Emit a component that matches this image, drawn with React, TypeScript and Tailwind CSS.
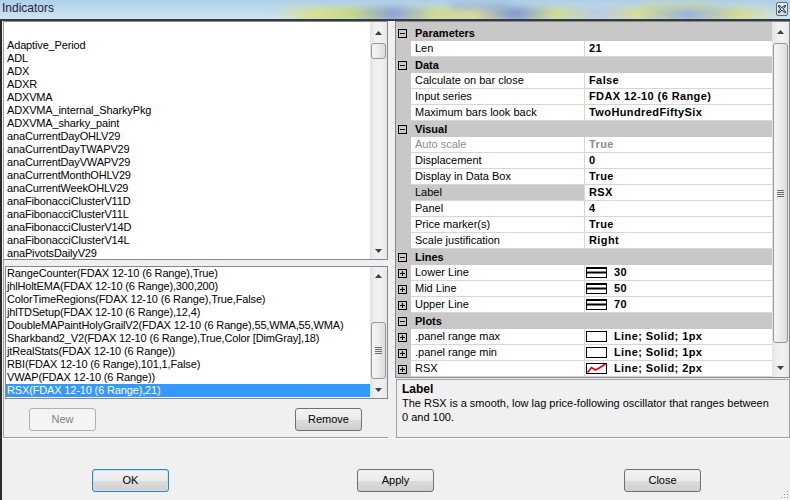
import React from "react";

const available = [
  "",
  "Adaptive_Period",
  "ADL",
  "ADX",
  "ADXR",
  "ADXVMA",
  "ADXVMA_internal_SharkyPkg",
  "ADXVMA_sharky_paint",
  "anaCurrentDayOHLV29",
  "anaCurrentDayTWAPV29",
  "anaCurrentDayVWAPV29",
  "anaCurrentMonthOHLV29",
  "anaCurrentWeekOHLV29",
  "anaFibonacciClusterV11D",
  "anaFibonacciClusterV11L",
  "anaFibonacciClusterV14D",
  "anaFibonacciClusterV14L",
  "anaPivotsDailyV29",
];

const applied = [
  "RangeCounter(FDAX 12-10 (6 Range),True)",
  "jhlHoltEMA(FDAX 12-10 (6 Range),300,200)",
  "ColorTimeRegions(FDAX 12-10 (6 Range),True,False)",
  "jhlTDSetup(FDAX 12-10 (6 Range),12,4)",
  "DoubleMAPaintHolyGrailV2(FDAX 12-10 (6 Range),55,WMA,55,WMA)",
  "Sharkband2_V2(FDAX 12-10 (6 Range),True,Color [DimGray],18)",
  "jtRealStats(FDAX 12-10 (6 Range))",
  "RBI(FDAX 12-10 (6 Range),101,1,False)",
  "VWAP(FDAX 12-10 (6 Range))",
  "RSX(FDAX 12-10 (6 Range),21)",
];

type Prop = {
  name: string;
  value: string;
  disabled?: boolean;
  selected?: boolean;
  icon?: "line" | "plot" | "plotRed";
};

const sections: { title: string; rows: Prop[] }[] = [
  { title: "Parameters", rows: [{ name: "Len", value: "21" }] },
  {
    title: "Data",
    rows: [
      { name: "Calculate on bar close", value: "False" },
      { name: "Input series", value: "FDAX 12-10 (6 Range)" },
      { name: "Maximum bars look back", value: "TwoHundredFiftySix" },
    ],
  },
  {
    title: "Visual",
    rows: [
      { name: "Auto scale", value: "True", disabled: true },
      { name: "Displacement", value: "0" },
      { name: "Display in Data Box", value: "True" },
      { name: "Label", value: "RSX", selected: true },
      { name: "Panel", value: "4" },
      { name: "Price marker(s)", value: "True" },
      { name: "Scale justification", value: "Right" },
    ],
  },
  {
    title: "Lines",
    rows: [
      { name: "Lower Line", value: "30", icon: "line" },
      { name: "Mid Line", value: "50", icon: "line" },
      { name: "Upper Line", value: "70", icon: "line" },
    ],
  },
  {
    title: "Plots",
    rows: [
      { name: ".panel range max", value: "Line; Solid; 1px", icon: "plot" },
      { name: ".panel range min", value: "Line; Solid; 1px", icon: "plot" },
      { name: "RSX", value: "Line; Solid; 2px", icon: "plotRed" },
    ],
  },
];

function Arrow({ down }: { down?: boolean }) {
  return (
    <svg width="7" height="4" viewBox="0 0 7 4">
      <polygon
        points={down ? "0,0 7,0 3.5,4" : "3.5,0 7,4 0,4"}
        fill="#3f3f3f"
      />
    </svg>
  );
}

function ScrollBar({
  up,
  gap,
  thumb,
  down,
  grip,
}: {
  up: string;
  gap: string;
  thumb: string;
  down: string;
  grip?: boolean;
}) {
  return (
    <div className="w-[17px] flex flex-col bg-[linear-gradient(to_right,#e3e3e3,#f1f1f1_35%,#f1f1f1_65%,#e6e6e6)]">
      <div className={`${up} flex items-center justify-center`}>
        <Arrow />
      </div>
      <div className={gap} />
      <div
        className={`${thumb} mx-[1px] rounded-[3px] border border-[#979797] bg-[linear-gradient(to_right,#f6f6f6,#ececec_45%,#dcdcdc)] flex flex-col items-center justify-center gap-[1px]`}
      >
        {grip &&
          [0, 1, 2, 3].map((i) => (
            <div key={i} className="w-[7px] h-[1px] bg-[#6a6a6a]" />
          ))}
      </div>
      <div className="flex-1" />
      <div className={`${down} flex items-center justify-center`}>
        <Arrow down />
      </div>
    </div>
  );
}

function Expander({ open }: { open: boolean }) {
  return (
    <svg width="9" height="9" viewBox="0 0 9 9">
      <rect x="0.5" y="0.5" width="8" height="8" fill="none" stroke="#000" />
      <line x1="2" y1="4.5" x2="7" y2="4.5" stroke="#000" />
      {!open && <line x1="4.5" y1="2" x2="4.5" y2="7" stroke="#000" />}
    </svg>
  );
}

function ValueIcon({ kind }: { kind: "line" | "plot" | "plotRed" }) {
  return (
    <svg width="21" height="11" viewBox="0 0 21 11" className="shrink-0">
      <rect x="0.5" y="0.5" width="20" height="10" fill="#fff" stroke="#000" />
      {kind === "line" && (
        <>
          <line x1="0" y1="1" x2="21" y2="1" stroke="#000" strokeWidth="2" />
          <line x1="0" y1="5.5" x2="21" y2="5.5" stroke="#000" strokeWidth="2" />
        </>
      )}
      {kind === "plotRed" && (
        <polyline
          points="1.5,9.5 5.5,4.5 9.5,7 14,4.5 19.5,1"
          fill="none"
          stroke="#e4000f"
          strokeWidth="1.6"
        />
      )}
    </svg>
  );
}

function Button({
  label,
  className,
  disabled,
  focused,
}: {
  label: string;
  className: string;
  disabled?: boolean;
  focused?: boolean;
}) {
  const look = disabled
    ? "border-[#adb2b5] bg-[#f4f4f4] text-[#838383]"
    : focused
    ? "border-[#3c7fb1] text-black shadow-[inset_0_0_0_1px_#bfe3f8] bg-[linear-gradient(to_bottom,#f2f2f2_0%,#ebebeb_50%,#dddddd_51%,#cfcfcf_100%)]"
    : "border-[#707070] text-black bg-[linear-gradient(to_bottom,#f2f2f2_0%,#ebebeb_50%,#dddddd_51%,#cfcfcf_100%)]";
  return (
    <div
      className={`${className} h-[23px] w-[67px] shrink-0 rounded-[3px] border flex items-center justify-center text-[11px] ${look}`}
    >
      {label}
    </div>
  );
}

function PropertyGrid() {
  return (
    <div className="h-[357px] border border-[#828790] bg-white flex overflow-hidden">
      <div className="w-[376px] flex flex-col pt-[3px] bg-[#c8c8c8]">
        {sections.map((s) => (
          <div key={s.title} className="flex flex-col">
            <div className="h-[16px] flex items-center bg-[#c8c8c8]">
              <div className="w-[15px] pl-[2px] flex items-center">
                <Expander open />
              </div>
              <span className="pl-[4px] font-bold text-black leading-[16px]">
                {s.title}
              </span>
            </div>
            {s.rows.map((r) => (
              <div key={r.name} className="h-[16px] flex">
                <div className="w-[15px] pl-[2px] flex items-center bg-[#c8c8c8]">
                  {r.icon && <Expander open={false} />}
                </div>
                <div
                  className={`w-[174px] border-r border-b border-[#d6d6d6] pl-[4px] leading-[15px] whitespace-nowrap ${
                    r.selected ? "bg-[#c8c8c8]" : "bg-white"
                  } ${r.disabled ? "text-[#8d8d8d]" : "text-black"}`}
                >
                  {r.name}
                </div>
                <div
                  className={`flex-1 flex items-center bg-white border-b border-[#d6d6d6] font-bold tracking-[0.4px] leading-[15px] whitespace-nowrap ${
                    r.disabled ? "text-[#8d8d8d]" : "text-black"
                  } ${r.icon ? "pl-[1px] gap-[7px]" : "pl-[4px]"}`}
                >
                  {r.icon && <ValueIcon kind={r.icon} />}
                  {r.value}
                </div>
              </div>
            ))}
          </div>
        ))}
      </div>
      <ScrollBar
        up="h-[20px]"
        gap="h-[1px]"
        thumb="h-[300px]"
        down="h-[19px]"
        grip
      />
    </div>
  );
}

function TitleBar() {
  return (
    <div className="relative h-[19px] overflow-hidden bg-[linear-gradient(to_bottom,#aed0e8,#bedaed_50%,#cfe6f4)]">
      <div className="absolute left-[270px] right-[10px] top-[7px] h-[14px] blur-[3px] opacity-80 bg-[linear-gradient(90deg,transparent_0%,#d9e27c_8%,#c6d66e_16%,#7d92cf_24%,#cfd97a_32%,#e0d489_40%,#6f86c8_48%,#d3dc7c_56%,#b4c6e4_64%,#d8de7f_72%,#8ea4d8_82%,#d6dc7a_92%,transparent_100%)]" />
      <div className="absolute left-[450px] top-[2px] w-[60px] h-[8px] blur-[3px] bg-[#8ba8d0] opacity-50" />
      <div className="absolute left-[640px] top-[2px] w-[70px] h-[8px] blur-[3px] bg-[#c9d88a] opacity-50" />
      <span className="relative pl-[2px] text-[12px] leading-[16px] text-[#1b2733]">
        Indicators
      </span>
      <div className="absolute right-[2px] top-[2px] w-[12px] h-[14px] rounded-[2px] border border-[#5f6e7b] bg-[linear-gradient(to_bottom,#eef3f7,#cdd9e3)] flex items-center justify-center">
        <svg width="8" height="8" viewBox="0 0 8 8">
          <path
            d="M1 1 L7 7 M7 1 L1 7"
            stroke="#39444f"
            strokeWidth="2.4"
            strokeLinecap="square"
          />
          <path d="M1.5 1.5 L6.5 6.5 M6.5 1.5 L1.5 6.5" stroke="#f4f7fa" strokeWidth="0.8" />
        </svg>
      </div>
    </div>
  );
}

export default function App() {
  return (
    <div className="w-[790px] h-[500px] overflow-hidden flex flex-col bg-[#f0f0f0] text-[11px] text-black font-['Liberation_Sans',Arial,sans-serif]">
      <TitleBar />
      <div className="h-[2px] bg-[#3a3a3a]" />
      <div className="relative flex-1 flex flex-col border-l-2 border-[#2b2b2b]">
        <div className="h-[417px] flex">
          {/* left: indicator lists */}
          <div className="ml-[1px] w-[385px] flex flex-col border-l border-b border-[#a0a0a0]">
            <div className="h-[239px] flex bg-white border-t border-r border-b border-[#828790]">
              <div className="flex-1 overflow-hidden pt-[4px] pl-[3px] tracking-[-0.15px]">
                {available.map((name, i) => (
                  <div key={i} className="h-[13px] leading-[13px] whitespace-nowrap">
                    {name}
                  </div>
                ))}
              </div>
              <ScrollBar up="h-[21px]" gap="h-0" thumb="h-[16px]" down="h-[17px]" />
            </div>
            <div className="mt-[6px] ml-[1px] w-[383px] h-[133px] flex bg-white border border-[#828790]">
              <div className="flex-1 overflow-hidden tracking-[-0.15px]">
                {applied.map((name, i) => {
                  const sel = i === applied.length - 1;
                  return (
                    <div
                      key={name}
                      className={`h-[13px] leading-[13px] pl-[1px] whitespace-nowrap ${
                        sel ? "bg-[#3399ff] text-white" : ""
                      }`}
                    >
                      {name}
                    </div>
                  );
                })}
              </div>
              <ScrollBar
                up="h-[17px]"
                gap="h-[38px]"
                thumb="h-[57px]"
                down="h-[17px]"
                grip
              />
            </div>
            <div className="mt-[9px] flex">
              <Button label="New" className="ml-[25px]" disabled />
              <Button label="Remove" className="ml-[199px]" />
            </div>
          </div>

          {/* right: properties */}
          <div className="ml-[7px] w-[395px] flex flex-col">
            <PropertyGrid />
            <div className="mt-[1px] ml-[1px] h-[59px] border border-[#a0a0a0] bg-[#f0f0f0] pt-[2px] pl-[5px] leading-[14px] text-[#000000]">
              <div className="font-bold text-[12px]">Label</div>
              <div className="whitespace-nowrap">
                The RSX is a smooth, low lag price-following oscillator that ranges between
              </div>
              <div>0 and 100.</div>
            </div>
          </div>
        </div>
        <div className="h-[1px] bg-white" />
        <div className="flex pt-[30px]">
          <Button label="OK" className="ml-[90px] w-[77px]" focused />
          <Button label="Apply" className="ml-[188px] w-[77px]" />
          <Button label="Close" className="ml-[190px] w-[77px]" />
        </div>
        <svg
          width="10"
          height="10"
          viewBox="0 0 10 10"
          className="absolute right-[1px] bottom-[1px]"
        >
          {[
            [8, 2],
            [8, 5],
            [5, 5],
            [8, 8],
            [5, 8],
            [2, 8],
          ].map(([x, y]) => (
            <rect key={`${x}-${y}`} x={x} y={y} width="1" height="1" fill="#9a9a9a" />
          ))}
        </svg>
      </div>
    </div>
  );
}
